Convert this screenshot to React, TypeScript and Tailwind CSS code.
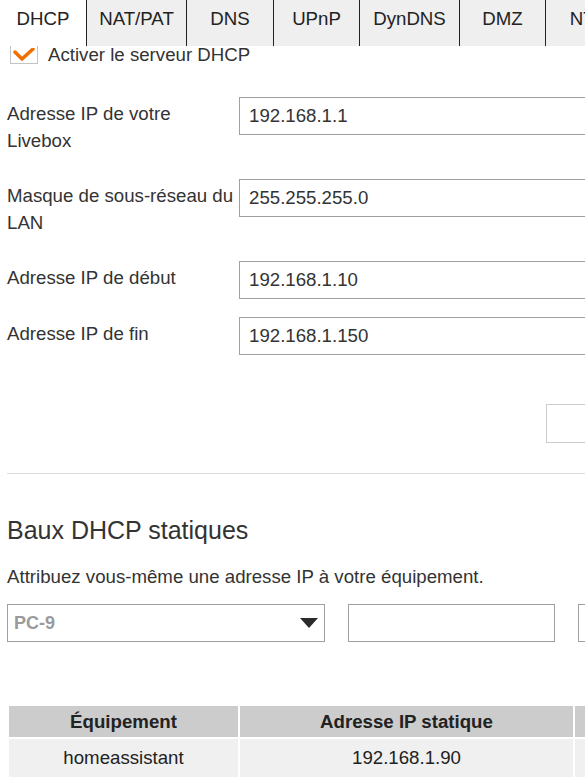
const tabs = [
  { label: "DHCP", w: "w-[87px]", active: true },
  { label: "NAT/PAT", w: "w-[100px]" },
  { label: "DNS", w: "w-[87px]" },
  { label: "UPnP", w: "w-[86px]" },
  { label: "DynDNS", w: "w-[100px]" },
  { label: "DMZ", w: "w-[86px]" },
  { label: "NTP", w: "w-[86px]" },
];

const fields = [
  { label: "Adresse IP de votre Livebox", value: "192.168.1.1" },
  { label: "Masque de sous-réseau du LAN", value: "255.255.255.0" },
  { label: "Adresse IP de début", value: "192.168.1.10" },
  { label: "Adresse IP de fin", value: "192.168.1.150" },
];

function Field({ label, value }: { label: string; value: string }) {
  return (
    <div className="flex items-start mb-[18px]">
      <div className="w-[239px] shrink-0 pl-[7px] pt-[3px] pb-[7px] leading-[27px] text-[#333]">
        {label}
      </div>
      <div className="w-[420px] shrink-0 h-[38px] border border-[#a0a0a0] bg-white px-[9px] flex items-center text-[#333]">
        {value}
      </div>
    </div>
  );
}

export default function App() {
  return (
    <div
      className="w-[585px] h-[778px] overflow-hidden bg-white text-[18.67px]"
      style={{ fontFamily: '"Liberation Sans", Arial, sans-serif' }}
    >
      {/* tabs */}
      <div className="flex h-[46px] w-[700px]">
        {tabs.map((t) => (
          <div
            key={t.label}
            className={`${t.w} shrink-0 h-full border-r border-[#222] text-center pt-[6px] leading-[26px] text-[#222] ${
              t.active ? "bg-white" : "bg-[#efefef]"
            }`}
          >
            {t.label}
          </div>
        ))}
      </div>

      {/* checkbox */}
      <div className="flex items-center h-[18px] pl-[10px]">
        <div className="w-[28px] h-[18px] border-x border-b border-[#c4c4c4] bg-white flex items-center justify-center">
          <svg width="22" height="14" viewBox="0 0 22 14">
            <polyline
              points="2,4 9,11 20,1"
              fill="none"
              stroke="#f16e00"
              strokeWidth="3.5"
              strokeLinecap="round"
              strokeLinejoin="round"
            />
          </svg>
        </div>
        <span className="ml-[10px] leading-[18px] text-[#333]">Activer le serveur DHCP</span>
      </div>

      {/* form */}
      <div className="mt-[33px]">
        {fields.map((f) => (
          <Field key={f.label} {...f} />
        ))}
      </div>

      <div className="flex mt-[49px] pl-[546px]">
        <div className="w-[150px] h-[39px] shrink-0 border border-[#cccccc] bg-white" />
      </div>

      <div className="ml-[7px] mt-[30px] border-t border-[#dddddd]" />

      <h2 className="ml-[7px] mt-[41px] text-[25px] leading-[30px] text-[#333]">
        Baux DHCP statiques
      </h2>
      <p className="ml-[7px] mt-[18px] leading-[27px] text-[#333]">
        Attribuez vous-même une adresse IP à votre équipement.
      </p>

      <div className="flex ml-[7px] mt-[14px] w-[700px]">
        <div className="w-[318px] h-[38px] shrink-0 border border-[#a0a0a0] flex items-center justify-between pl-[6px] pr-[6px]">
          <span className="font-bold text-[#9a9a9a] text-[18px]">PC-9</span>
          <svg width="18" height="10" viewBox="0 0 18 10">
            <polygon points="0,0 18,0 9,10" fill="#2b2b2b" />
          </svg>
        </div>
        <div className="w-[207px] h-[38px] shrink-0 ml-[23px] border border-[#a0a0a0]" />
        <div className="w-[207px] h-[38px] shrink-0 ml-[23px] border border-[#a0a0a0]" />
      </div>

      <table className="ml-[7px] mt-[62px] border-separate border-spacing-[2px] w-[800px] table-fixed">
        <colgroup>
          <col className="w-[229px]" />
          <col className="w-[333px]" />
          <col />
        </colgroup>
        <thead>
          <tr>
            <th className="h-[31px] bg-[#cccccc] font-bold text-[#222] text-center">Équipement</th>
            <th className="h-[31px] bg-[#cccccc] font-bold text-[#222] text-center">
              Adresse IP statique
            </th>
            <th className="h-[31px] bg-[#cccccc] font-bold text-[#222] text-center">Adresse MAC</th>
          </tr>
        </thead>
        <tbody>
          <tr>
            <td className="h-[38px] bg-[#f0f0f0] text-center text-[#222]">homeassistant</td>
            <td className="h-[38px] bg-[#f0f0f0] text-center text-[#222]">192.168.1.90</td>
            <td className="h-[38px] bg-[#f0f0f0] text-center text-[#222]" />
          </tr>
        </tbody>
      </table>
    </div>
  );
}
